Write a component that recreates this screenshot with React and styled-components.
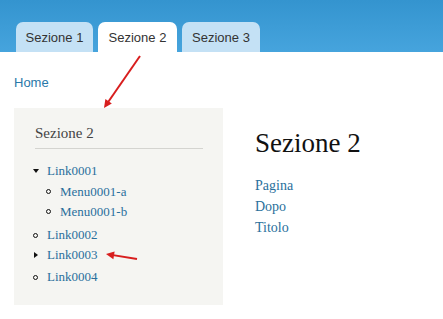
import React from "react";
import styled, { createGlobalStyle } from "styled-components";

const Global = createGlobalStyle`
  html, body { margin: 0; padding: 0; background: #fff; }
  body { font-family: "Liberation Sans", Arial, sans-serif; }
`;

const Page = styled.div`
  position: relative;
  width: 443px;
  height: 319px;
  overflow: hidden;
`;

const Header = styled.div`
  height: 52px;
  background: linear-gradient(#3494cf, #46a4dd);
  display: flex;
  align-items: flex-end;
  gap: 5px;
  padding-left: 16px;
`;

const Tab = styled.div`
  height: 30px;
  width: ${(p) => p.w}px;
  display: flex;
  align-items: center;
  justify-content: center;
  border-radius: 7px 7px 0 0;
  background: ${(p) => (p.active ? "#ffffff" : "#c4e1f5")};
  color: #333;
  font-size: 13px;
`;

const Content = styled.div`
  padding: 0 14px;
`;

const CrumbLink = styled.a`
  display: block;
  margin-top: 23px;
  font-size: 13px;
  line-height: 16px;
  color: #2a78a8;
  text-decoration: none;
`;

const Body = styled.div`
  display: flex;
  gap: 32px;
  margin-top: 17px;
  font-family: "Liberation Serif", "Times New Roman", serif;
`;

const Sidebar = styled.div`
  width: 168px;
  background: #f5f5f2;
  padding: 16px 20px 16px 21px;
`;

const SideTitle = styled.div`
  font-size: 15px;
  line-height: 18px;
  color: #444;
  padding-bottom: 6px;
  border-bottom: 1px solid #d4d4d0;
`;

const List = styled.div`
  margin: ${(p) => (p.nested ? "0 0 4px 0" : "11px 0 0 -3px")};
  padding-left: ${(p) => (p.nested ? 13 : 0)}px;
`;

const Item = styled.div`
  display: flex;
  align-items: center;
  height: ${(p) => p.h || 21}px;
  font-size: 13px;
  color: #2a6f9c;
`;

const Marker = styled.span`
  width: 15px;
  height: 10px;
  display: flex;
  align-items: center;
  &::before {
    content: "";
    display: block;
    ${(p) =>
      p.kind === "down"
        ? "border-left:3.5px solid transparent;border-right:3.5px solid transparent;border-top:4px solid #111;margin-left:1px;"
        : p.kind === "right"
        ? "border-top:3.5px solid transparent;border-bottom:3.5px solid transparent;border-left:4px solid #111;margin-left:2px;"
        : "width:3px;height:3px;border:1px solid #111;border-radius:50%;margin-left:1px;"}
  }
`;

const Main = styled.div`
  padding-top: 20px;
`;

const MainTitle = styled.h1`
  margin: 0 0 17px;
  font-weight: normal;
  font-size: 27px;
  line-height: 30px;
  color: #111;
`;

const MainLink = styled.div`
  font-size: 14px;
  line-height: 21px;
  color: #2a6f9c;
`;

const Overlay = styled.svg`
  position: absolute;
  left: 0;
  top: 0;
  pointer-events: none;
`;

function Arrow({ x1, y1, x2, y2 }) {
  const a = Math.atan2(y2 - y1, x2 - x1);
  const L = 9;
  const w = 0.45;
  const p1 = [x2 - L * Math.cos(a - w), y2 - L * Math.sin(a - w)];
  const p2 = [x2 - L * Math.cos(a + w), y2 - L * Math.sin(a + w)];
  return (
    <g>
      <line x1={x1} y1={y1} x2={x2 - 4 * Math.cos(a)} y2={y2 - 4 * Math.sin(a)} stroke="#d81e1e" strokeWidth="2" />
      <polygon points={`${x2},${y2} ${p1.join(",")} ${p2.join(",")}`} fill="#d81e1e" />
    </g>
  );
}

export default function App() {
  return (
    <Page>
      <Global />
      <Header>
        <Tab w={77}>Sezione 1</Tab>
        <Tab w={79} active>Sezione 2</Tab>
        <Tab w={78}>Sezione 3</Tab>
      </Header>
      <Content>
        <CrumbLink>Home</CrumbLink>
        <Body>
          <Sidebar>
            <SideTitle>Sezione 2</SideTitle>
            <List>
              <Item h={21}><Marker kind="down" />Link0001</Item>
              <List nested>
                <Item h={21}><Marker kind="dot" />Menu0001-a</Item>
                <Item h={19}><Marker kind="dot" />Menu0001-b</Item>
              </List>
              <Item h={20}><Marker kind="dot" />Link0002</Item>
              <Item h={20}><Marker kind="right" />Link0003</Item>
              <Item h={24}><Marker kind="dot" />Link0004</Item>
            </List>
          </Sidebar>
          <Main>
            <MainTitle>Sezione 2</MainTitle>
            <MainLink>Pagina</MainLink>
            <MainLink>Dopo</MainLink>
            <MainLink>Titolo</MainLink>
          </Main>
        </Body>
      </Content>
      <Overlay width="443" height="319">
        <Arrow x1={140} y1={56} x2={104} y2={108} />
        <Arrow x1={137} y1={259} x2={106} y2={254} />
      </Overlay>
    </Page>
  );
}
